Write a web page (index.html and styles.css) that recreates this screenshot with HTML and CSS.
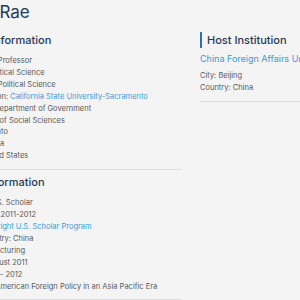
FILE: index.html
```html
<!DOCTYPE html>
<html lang="en">
<head>
  <meta charset="UTF-8" />
  <meta name="viewport" content="width=device-width, initial-scale=1.0"/>
  <title>Scholar Directory - Rae</title>
  <link rel="stylesheet" href="styles.css">
</head>
<body>
  <div class="page">
    <h1 class="name">Helen Rae</h1>

    <div class="columns">
      <div class="main">
        <section class="block">
          <h2>Scholar Information</h2>
          <p>Faculty Rank: Professor</p>
          <p>Discipline: Political Science</p>
          <p>Subject Area: Political Science</p>
          <p>Home Institution: <a href="#">California State University-Sacramento</a></p>
          <p>Department: Department of Government</p>
          <p>Body: College of Social Sciences</p>
          <p>Loc: Sacramento</p>
          <p>State: California</p>
          <p>Country: United States</p>
        </section>

        <section class="block">
          <h2>Award Information</h2>
          <p>Grant Role: U.S. Scholar</p>
          <p>Program Year: 2011-2012</p>
          <p>Program: <a href="#">Fulbright U.S. Scholar Program</a></p>
          <p>Program Country: China</p>
          <p>Grant Type: Lecturing</p>
          <p>Start Day: August 2011</p>
          <p>Duration: 2011 - 2012</p>
          <p>Course Title: American Foreign Policy in an Asia Pacific Era</p>
        </section>
      </div>

      <aside class="side">
        <section class="block">
          <h2 class="bar">Host Institution</h2>
          <a class="host" href="#">China Foreign Affairs University</a>
          <p>City: Beijing</p>
          <p>Country: China</p>
        </section>
      </aside>
    </div>
  </div>
</body>
</html>
```

FILE: styles.css
```css
body {
  margin: 0;
  background: #f4f4f4;
  font-family: Inter, "Noto Sans", sans-serif;
  color: #585858;
  overflow: hidden;
}

.page {
  width: 460px;
  margin-left: -52px;
}

.name {
  margin: 0;
  padding-top: 2px;
  font-size: 17px;
  font-weight: 400;
  color: #1f3a5c;
  line-height: 20px;
}

.columns {
  display: grid;
  grid-template-columns: 233px 1fr;
  gap: 19px;
  margin-top: 10px;
}

.block {
  border-bottom: 1px solid #dedede;
  padding-bottom: 7px;
  margin-bottom: 4px;
}

h2 {
  margin: 0 0 7px;
  font-size: 11px;
  font-weight: 500;
  color: #1f3a5c;
  line-height: 16px;
}

h2.bar {
  border-left: 2px solid #2e6db3;
  padding-left: 5px;
  margin-bottom: 4px;
}

p {
  margin: 0;
  font-size: 7.5px;
  line-height: 11.9px;
}

a {
  color: #3b9bd8;
  text-decoration: none;
}

.host {
  display: block;
  font-size: 9px;
  line-height: 14px;
  margin-bottom: 4px;
  white-space: nowrap;
}
```
